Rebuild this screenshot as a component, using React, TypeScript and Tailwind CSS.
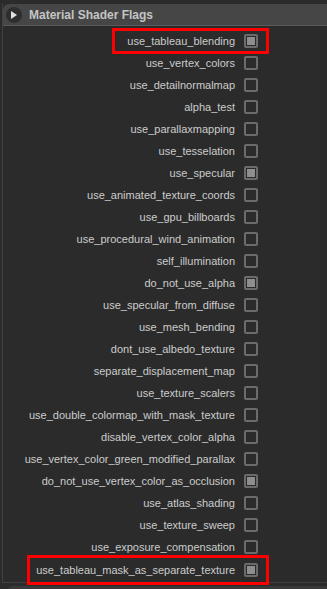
import clsx from 'clsx';

interface Flag {
  name: string;
  checked: boolean;
  marked?: 'top' | 'bottom';
}

const flags: Flag[] = [
  {name: 'use_tableau_blending', checked: true, marked: 'top'},
  {name: 'use_vertex_colors', checked: false},
  {name: 'use_detailnormalmap', checked: false},
  {name: 'alpha_test', checked: false},
  {name: 'use_parallaxmapping', checked: false},
  {name: 'use_tesselation', checked: false},
  {name: 'use_specular', checked: true},
  {name: 'use_animated_texture_coords', checked: false},
  {name: 'use_gpu_billboards', checked: false},
  {name: 'use_procedural_wind_animation', checked: false},
  {name: 'self_illumination', checked: false},
  {name: 'do_not_use_alpha', checked: true},
  {name: 'use_specular_from_diffuse', checked: false},
  {name: 'use_mesh_bending', checked: false},
  {name: 'dont_use_albedo_texture', checked: false},
  {name: 'separate_displacement_map', checked: false},
  {name: 'use_texture_scalers', checked: false},
  {name: 'use_double_colormap_with_mask_texture', checked: false},
  {name: 'disable_vertex_color_alpha', checked: false},
  {name: 'use_vertex_color_green_modified_parallax', checked: false},
  {name: 'do_not_use_vertex_color_as_occlusion', checked: true},
  {name: 'use_atlas_shading', checked: false},
  {name: 'use_texture_sweep', checked: false},
  {name: 'use_exposure_compensation', checked: false},
  {name: 'use_tableau_mask_as_separate_texture', checked: true, marked: 'bottom'},
];

function FlagRow({flag}: {flag: Flag}) {
  return (
    <div className="h-[22px] flex items-center justify-end pr-[60px]">
      <div
        className={clsx(
          'flex items-center pr-[9px]',
          flag.marked === 'top' && 'h-[22px] pl-[13px] outline-[3px] outline outline-[#ff0000] -outline-offset-1',
          flag.marked === 'bottom' && 'h-[26px] pl-[7px] mt-[2px] outline-[3px] outline outline-[#ff0000] -outline-offset-1'
        )}
      >
        <span className="text-[11px] text-[#cbcbcb] whitespace-nowrap mr-[9px]">
          {flag.name}
        </span>
        <div className="w-[14px] h-[14px] rounded-[2px] border-2 border-[#6b6b6b] flex items-center justify-center">
          {flag.checked && <div className="w-[8px] h-[8px] bg-[#8e8e8e]" />}
        </div>
      </div>
    </div>
  );
}

export default function App() {
  return (
    <div
      className="w-[327px] h-[589px] bg-[#2b2b2b] overflow-hidden pt-[4px]"
      style={{fontFamily: '"Liberation Sans", Arial, sans-serif'}}
    >
      <div className="ml-[2px] border-l border-b border-[#404040] h-[579px]">
        <div className="h-[22px] bg-[#464646] rounded-tl-[6px] flex items-center border-b border-[#5a5a5a]">
          <div className="w-[16px] h-[16px] ml-[3px] rounded-full bg-[#2e2e2e] flex items-center justify-center">
            <svg width="6" height="8" viewBox="0 0 6 8">
              <path d="M0 0 L6 4 L0 8 Z" fill="#e0e0e0" />
            </svg>
          </div>
          <span className="ml-[7px] text-[12px] font-bold text-[#c4c4c4]">
            Material Shader Flags
          </span>
        </div>
        <div className="pt-[4px]">
          {flags.map((f) => (
            <FlagRow key={f.name} flag={f} />
          ))}
        </div>
      </div>
      <div className="ml-[7px] mt-[3px] h-[10px] bg-[#3a3a3a] rounded-tl-[6px]" />
    </div>
  );
}
